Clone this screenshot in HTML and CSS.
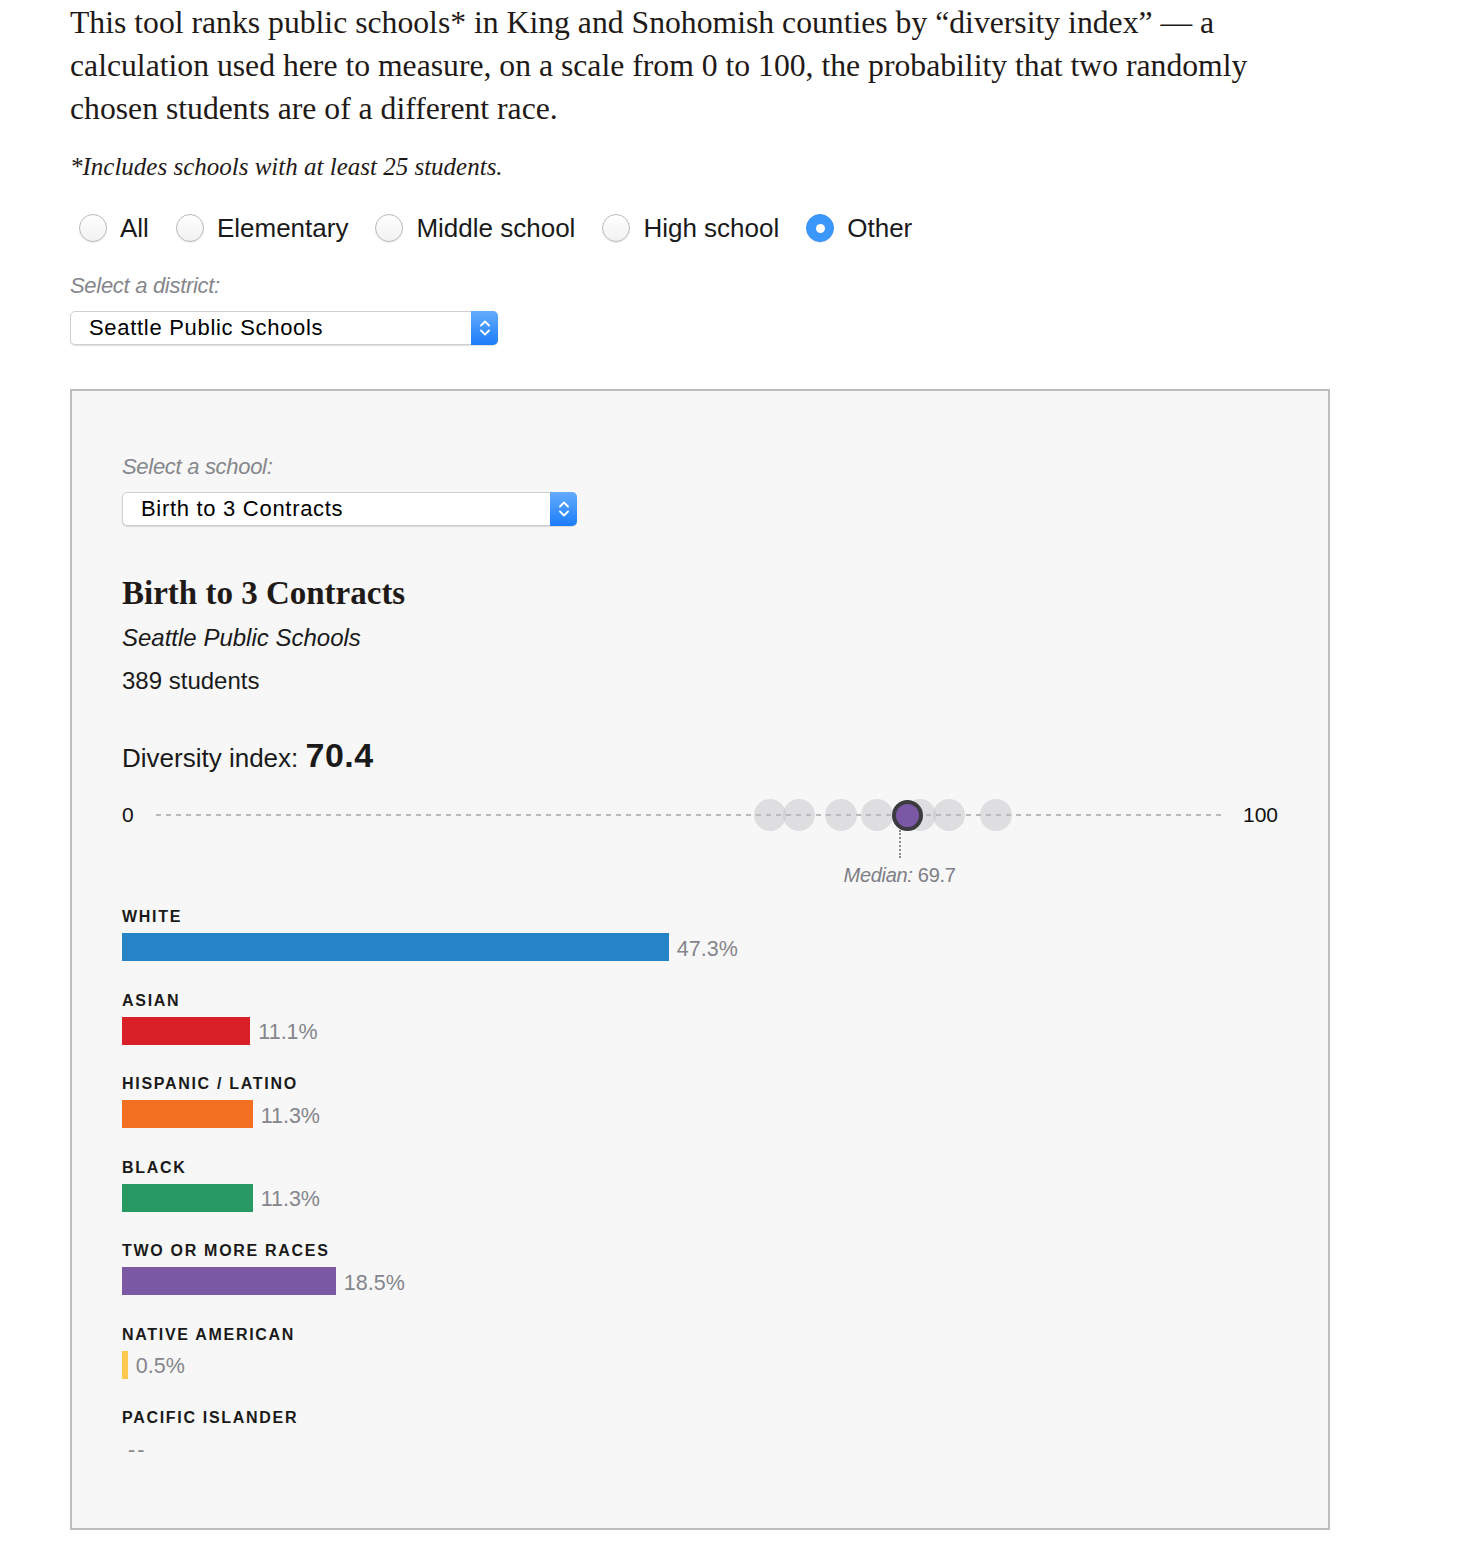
FILE: index.html
```html
<!DOCTYPE html>
<html lang="en">
<head>
<meta charset="utf-8">
<title>Diversity index</title>
<link rel="stylesheet" href="styles.css">
</head>
<body>
<div class="page">
  <p class="intro">This tool ranks public schools* in King and Snohomish counties by “diversity index” — a calculation used here to measure, on a scale from 0 to 100, the probability that two randomly chosen students are of a different race.</p>
  <p class="footnote">*Includes schools with at least 25 students.</p>

  <div class="radios">
    <label class="radio"><span class="radio-dot"></span><span class="radio-text">All</span></label>
    <label class="radio"><span class="radio-dot"></span><span class="radio-text">Elementary</span></label>
    <label class="radio"><span class="radio-dot"></span><span class="radio-text">Middle school</span></label>
    <label class="radio"><span class="radio-dot"></span><span class="radio-text">High school</span></label>
    <label class="radio"><span class="radio-dot checked"></span><span class="radio-text">Other</span></label>
  </div>

  <div class="field-label">Select a district:</div>
  <div class="select select-district">
    <span class="select-text">Seattle Public Schools</span>
    <span class="select-arrow"><svg width="12" height="20" viewBox="0 0 12 20"><path d="M2 7.5 L6 3.5 L10 7.5 M2 12.5 L6 16.5 L10 12.5" fill="none" stroke="#fff" stroke-width="1.8" stroke-linecap="round" stroke-linejoin="round"/></svg></span>
  </div>

  <div class="panel">
    <div class="field-label">Select a school:</div>
    <div class="select select-school">
      <span class="select-text">Birth to 3 Contracts</span>
      <span class="select-arrow"><svg width="12" height="20" viewBox="0 0 12 20"><path d="M2 7.5 L6 3.5 L10 7.5 M2 12.5 L6 16.5 L10 12.5" fill="none" stroke="#fff" stroke-width="1.8" stroke-linecap="round" stroke-linejoin="round"/></svg></span>
    </div>

    <h2 class="school-name">Birth to 3 Contracts</h2>
    <div class="school-district">Seattle Public Schools</div>
    <div class="school-count">389 students</div>

    <div class="index-line">Diversity index: <strong class="index-value">70.4</strong></div>

    <div class="scale">
      <span class="scale-end">0</span>
      <div class="track">
        <span class="dot" style="left:57.6%"></span>
        <span class="dot" style="left:60.3%"></span>
        <span class="dot" style="left:64.2%"></span>
        <span class="dot" style="left:67.6%"></span>
        <span class="dot" style="left:71.6%"></span>
        <span class="dot" style="left:74.3%"></span>
        <span class="dot" style="left:78.7%"></span>
        <span class="median-line" style="left:69.7%"></span>
        <span class="median-label" style="left:69.7%"><em>Median:</em> 69.7</span>
        <span class="dot dot-current" style="left:70.4%"></span>
      </div>
      <span class="scale-end">100</span>
    </div>

    <div class="races">
      <div class="race">
        <div class="race-name">White</div>
        <div class="race-row"><span class="bar bar-white" style="width:47.3%"></span><span class="pct">47.3%</span></div>
      </div>
      <div class="race">
        <div class="race-name">Asian</div>
        <div class="race-row"><span class="bar bar-asian" style="width:11.1%"></span><span class="pct">11.1%</span></div>
      </div>
      <div class="race">
        <div class="race-name">Hispanic / Latino</div>
        <div class="race-row"><span class="bar bar-hispanic" style="width:11.3%"></span><span class="pct">11.3%</span></div>
      </div>
      <div class="race">
        <div class="race-name">Black</div>
        <div class="race-row"><span class="bar bar-black" style="width:11.3%"></span><span class="pct">11.3%</span></div>
      </div>
      <div class="race">
        <div class="race-name">Two or more races</div>
        <div class="race-row"><span class="bar bar-two" style="width:18.5%"></span><span class="pct">18.5%</span></div>
      </div>
      <div class="race">
        <div class="race-name">Native American</div>
        <div class="race-row"><span class="bar bar-native" style="width:0.5%"></span><span class="pct">0.5%</span></div>
      </div>
      <div class="race">
        <div class="race-name">Pacific Islander</div>
        <div class="race-row"><span class="pct pct-none">--</span></div>
      </div>
    </div>
  </div>
</div>
</body>
</html>
```

FILE: styles.css
```css
* { box-sizing: border-box; }

html, body {
  margin: 0;
  padding: 0;
  background: #fff;
}

body {
  font-family: "Liberation Sans", Arial, sans-serif;
  color: #1a1a1a;
}

.page {
  width: 1330px;
  padding-left: 70px;
}

.intro {
  margin: 0;
  padding-top: 1px;
  width: 1230px;
  font-family: "Liberation Serif", "Times New Roman", serif;
  font-size: 31.7px;
  line-height: 43px;
  color: #1f1a17;
}

.footnote {
  margin: 22px 0 0;
  font-family: "Liberation Serif", "Times New Roman", serif;
  font-style: italic;
  font-size: 25px;
  line-height: 30px;
  color: #1f1a17;
}

.radios {
  display: flex;
  align-items: center;
  gap: 27px;
  margin-top: 31px;
  padding-left: 9px;
  height: 30px;
}

.radio {
  display: flex;
  align-items: center;
  gap: 13px;
}

.radio-dot {
  width: 28px;
  height: 28px;
  border-radius: 50%;
  border: 1px solid #b9b9b9;
  background: linear-gradient(#ffffff, #f1f1f1);
  box-shadow: 0 1px 1px rgba(0,0,0,0.08);
  display: flex;
  align-items: center;
  justify-content: center;
}

.radio-dot.checked {
  border-color: #3895f8;
  background: #3b97fa;
}

.radio-dot.checked::after {
  content: "";
  width: 9px;
  height: 9px;
  border-radius: 50%;
  background: #fff;
}

.radio-text {
  font-size: 26px;
  line-height: 30px;
  color: #1a1a1a;
}

.field-label {
  margin-top: 29px;
  font-style: italic;
  font-size: 22px;
  line-height: 28px;
  color: #86868c;
  letter-spacing: -0.3px;
}

.select {
  display: flex;
  align-items: stretch;
  height: 34px;
  margin-top: 11px;
  background: #fff;
  border: 1px solid #cfcfcf;
  border-radius: 5px;
  box-shadow: 0 1px 1px rgba(0,0,0,0.12);
}

.select-district { width: 428px; }
.select-school { width: 455px; }

.select-text {
  flex: 1;
  display: flex;
  align-items: center;
  padding-left: 18px;
  font-size: 22px;
  letter-spacing: 0.7px;
  color: #000;
}

.select-arrow {
  width: 27px;
  margin: -1px -1px -1px 0;
  border-radius: 0 5px 5px 0;
  background: linear-gradient(#64acfc, #1c7cf9);
  display: flex;
  align-items: center;
  justify-content: center;
}

.panel {
  margin-top: 44px;
  width: 1260px;
  border: 2px solid #bdbdbd;
  background: #f7f7f7;
  padding: 62px 50px 66px;
}

.panel .field-label { margin-top: 0; }

.school-name {
  margin: 45px 0 0;
  font-family: "Liberation Serif", "Times New Roman", serif;
  font-weight: bold;
  font-size: 33px;
  line-height: 44px;
  color: #1f1a17;
}

.school-district {
  font-style: italic;
  font-size: 24px;
  line-height: 46px;
  color: #1a1a1a;
}

.school-count {
  font-size: 24px;
  line-height: 40px;
  color: #1a1a1a;
}

.index-line {
  margin-top: 32px;
  font-size: 26px;
  line-height: 44px;
  color: #1a1a1a;
}

.index-value {
  font-size: 34px;
  font-weight: bold;
  letter-spacing: 0.5px;
}

.scale {
  display: flex;
  align-items: center;
  height: 40px;
  margin-top: 15px;
  margin-bottom: 72px;
}

.scale-end {
  font-size: 21px;
  color: #111;
}

.scale-end:first-child { margin-right: 22px; }
.scale-end:last-child { margin-left: 20px; }

.track {
  position: relative;
  flex: 1;
  height: 40px;
  background: linear-gradient(to right, #b9b9b9 50%, transparent 50%) 0 50% / 10px 2px repeat-x;
}

.dot {
  position: absolute;
  top: 4px;
  width: 32px;
  height: 32px;
  margin-left: -16px;
  border-radius: 50%;
  background: rgba(190, 190, 196, 0.45);
}

.dot-current {
  top: 4.5px;
  width: 31px;
  height: 31px;
  margin-left: -15.5px;
  background: #7b58a6;
  border: 4px solid #3c3c40;
}

.median-line {
  position: absolute;
  top: 35px;
  height: 28px;
  border-left: 2px dotted #8a8a8a;
  margin-left: -1px;
}

.median-label {
  position: absolute;
  top: 68px;
  transform: translateX(-50%);
  white-space: nowrap;
  font-size: 20px;
  line-height: 24px;
  color: #7e7e86;
  letter-spacing: -0.3px;
}

.median-label em { font-style: italic; }

.race { margin-bottom: 29.5px; }
.race:last-child { margin-bottom: 0; }

.race-name {
  font-size: 16px;
  font-weight: bold;
  line-height: 20px;
  letter-spacing: 1.7px;
  text-transform: uppercase;
  color: #1a1a1a;
}

.race-row {
  display: flex;
  align-items: center;
  height: 28px;
  margin-top: 6px;
}

.bar {
  height: 28px;
}

.bar-white { background: #2484c6; }
.bar-asian { background: #d92028; }
.bar-hispanic { background: #f37022; }
.bar-black { background: #289963; }
.bar-two { background: #7b59a4; }
.bar-native { background: #ffc850; }

.pct {
  margin-left: 8px;
  font-size: 21.5px;
  color: #85858c;
  position: relative;
  top: 2px;
}

.pct-none {
  margin-left: 6px;
  letter-spacing: 2px;
}
```
